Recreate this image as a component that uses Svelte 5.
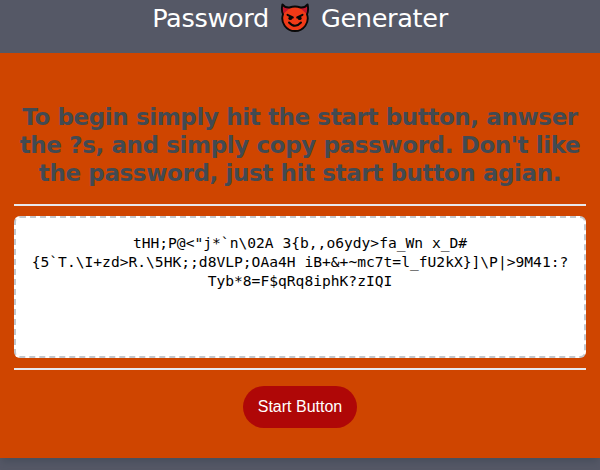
<script>
  const passwordLines = [
    'tHH;P@<"j*`n\\02A 3{b,,o6ydy>fa_Wn x_D#',
    "{5`T.\\I+zd>R.\\5HK;;d8VLP;OAa4H iB+&+~mc7t=l_fU2kX}]\\P|>9M41:?",
    'Tyb*8=F$qRq8iphK?zIQI'
  ];
</script>

<div class="page">
  <header>
    <span class="word">Password</span>
    <svg class="devil" width="30" height="30" viewBox="0 0 30 30" aria-label="devil">
      <circle cx="15" cy="15.8" r="12.4" fill="#f03a17" />
      <path d="M2.4 1.4C1.5 6 1.8 9 3.2 11L10 5C6.5 4.8 4 3.6 2.4 1.4ZM27.6 1.4C28.5 6 28.2 9 26.8 11L20 5C23.5 4.8 26 3.6 27.6 1.4Z" fill="#c4162b" />
      <path d="M2.4 1.4C1.5 6 1.8 9 3 11.2A12.7 12.7 0 1 0 27 11.2C28.2 9 28.5 6 27.6 1.4C26 3.6 23.4 4.8 20.5 4.5Q15 2.4 9.5 4.5C6.6 4.8 4 3.6 2.4 1.4Z" fill="none" stroke="#080808" stroke-width="1.9" stroke-linejoin="round" />
      <path d="M7.5 11.8L12.8 14.5M22.5 11.8L17.2 14.5M9 19.5Q15 26.2 21 19.5" fill="none" stroke="#080808" stroke-width="2" stroke-linecap="round" />
      <circle cx="10.3" cy="15.2" r="1.9" fill="#080808" /><circle cx="19.7" cy="15.2" r="1.9" fill="#080808" />
    </svg>
    <span class="word">Generater</span>
  </header>
  <main>
    <h2>
      <span>To begin simply hit the start button, anwser</span>
      <span>the ?s, and simply copy password. Don't like</span>
      <span>the password, just hit start button agian.</span>
    </h2>
    <div class="card">
      <div class="output">
        {#each passwordLines as line}<div>{line}</div>{/each}
      </div>
    </div>
    <button>Start Button</button>
  </main>
</div>

<style>
  :global(body) { margin: 0; background: #555866; overflow: hidden; }
  .page { height: 470px; overflow: hidden; background: #555866; font-family: Verdana, "DejaVu Sans", sans-serif; }
  header { height: 53px; display: flex; justify-content: center; align-items: flex-start; color: #fff; font-size: 25.6px; line-height: 36px; letter-spacing: -.35px; white-space: pre; }
  .devil { margin: 3px 11px 0 11px; flex: none; }
  main { height: 405px; box-sizing: border-box; padding: 50px 14px 0; display: flex; flex-direction: column; align-items: center; background: #cf4500; box-shadow: 0 6px 7px -2px rgba(50, 60, 75, .35); }
  h2 { margin: 0 0 17px; color: #424a52; font-size: 23px; line-height: 28px; font-weight: bold; letter-spacing: -.38px; text-align: center; }
  h2 span { display: block; white-space: nowrap; }
  .card { width: 100%; box-sizing: border-box; border: solid #e8e8ed; border-width: 2px 0; padding: 10px 0; }
  .output { height: 142px; box-sizing: border-box; border: 2px dashed #c3c7cd; border-radius: 6px; background: #fff; padding: 15px 0; color: #000; font-family: "DejaVu Sans Mono", monospace; font-size: 14.61px; line-height: 19px; text-align: center; white-space: pre; }
  button { margin: 16px 0 0; width: 114px; height: 42px; padding: 0; border: 0; border-radius: 21px; background: #af0707; color: #fff; font: 16px "Liberation Sans", Arial, sans-serif; }
</style>
